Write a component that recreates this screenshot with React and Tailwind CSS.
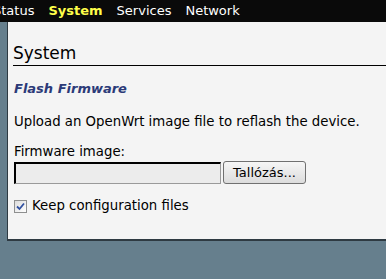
export default function App() {
  return (
    <div className="relative h-[279px] w-[386px] overflow-hidden bg-[#667f8d] font-['DejaVu_Sans',Verdana,sans-serif]">
      <div className="flex h-[22px] w-[386px] items-center gap-[14px] bg-[#0a0a0a] text-[13px] text-white">
        <span className="-ml-[7px]">Status</span>
        <span className="font-bold text-[#ffff4a]">System</span>
        <span>Services</span>
        <span>Network</span>
      </div>
      <div className="flex w-[386px] pl-[7px]">
        <div className="h-[219px] w-[400px] shrink-0 border-b-2 border-l border-[#2e3a42] bg-[#f4f4f4] pl-[5px]">
          <h2 className="mt-[21px] border-b border-black pb-[1px] text-[17px] leading-[21px] text-black">System</h2>
          <div className="pl-[1px] text-[13.3px] text-black">
            <h3 className="mt-[14px] text-[13px] font-bold italic leading-[18px] text-[#2b3a78]">Flash Firmware</h3>
            <p className="mt-[16px] leading-[16px]">Upload an OpenWrt image file to reflash the device.</p>
            <div className="mt-[14px] leading-[16px]">Firmware image:</div>
            <div className="mt-[1px] flex items-center gap-[2px]">
              <div className="h-[22px] w-[207px] border border-t-2 border-l-2 border-[#9a9a9a] border-t-black border-l-black bg-[#ececec]" />
              <button className="h-[23px] w-[83px] rounded-[3px] border border-[#707070] bg-gradient-to-b from-[#f6f6f6] to-[#dcdcdc] text-[13px] text-black">
                Tallózás...
              </button>
            </div>
            <label className="mt-[14px] flex items-center gap-[5px] leading-[16px]">
              <span className="flex h-[13px] w-[13px] items-center justify-center border border-[#8e8f8f] bg-gradient-to-br from-[#dcdcdc] to-white">
                <svg width="9" height="9" viewBox="0 0 9 9">
                  <path d="M1 4.5 L3.5 7 L8 1.5" fill="none" stroke="#3050a0" strokeWidth="1.8" />
                </svg>
              </span>
              Keep configuration files
            </label>
          </div>
        </div>
      </div>
    </div>
  );
}
